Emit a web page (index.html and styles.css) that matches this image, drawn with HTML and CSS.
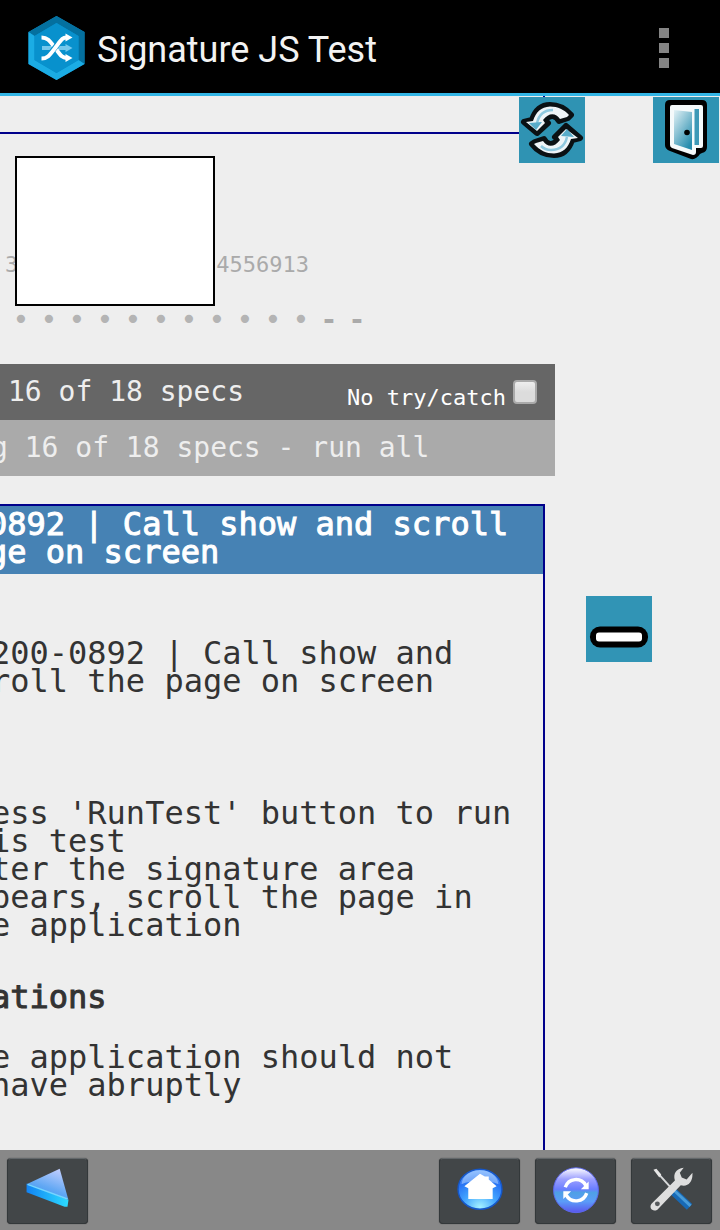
FILE: index.html
```html
<!DOCTYPE html>
<html lang="en">
<head>
<meta charset="utf-8">
<title>Signature JS Test</title>
<link rel="stylesheet" href="styles.css">
</head>
<body>
<header class="app-bar">
  <svg class="app-logo" viewBox="0 0 56 64" aria-hidden="true">
    <path fill="#078bc9" d="M28 0 56 16v32L28 64 0 48V16z"/>
    <path fill="#04709f" d="M28 0 56 16v32l-6-4V20L28 7 6 20 0 16z"/>
    <path fill="#1bace4" d="M0 16l6 4v24l22 13 22-13 6 4-28 16L0 48z"/>
    <path fill="#0891cd" d="M28 7l22 13v24L28 57 6 44V20z"/>
    <path fill="none" stroke="#75c8ec" stroke-width="4" d="M13.500 32H38"/>
    <path fill="#75c8ec" d="M37 28l7 4-7 4z"/>
    <path fill="none" stroke="#fff" stroke-width="4" d="M13 21.500c6 0 8 3 14 11s7 9.500 11 9.500"/>
    <path fill="none" stroke="#0891cd" stroke-width="5.500" d="M23 36l8-10"/>
    <path fill="none" stroke="#fff" stroke-width="4" d="M13 42.500c6 0 8-3 14-11s7-10 11-10"/>
    <path fill="#fff" d="M37 17.500l7 4-7 4zM37 38l7 4-7 4z"/>
  </svg>
  <h1 class="app-title">Signature JS Test</h1>
  <button class="menu-button" aria-label="More options"><span class="menu-dot"></span><span class="menu-dot"></span><span class="menu-dot"></span></button>
</header>

<main class="page">
  <div class="top-panel"></div>
  <div class="version"><span>3</span><span>4556913</span></div>
  <ul class="symbols">
    <li>•</li><li>•</li><li>•</li><li>•</li><li>•</li><li>•</li><li>•</li><li>•</li><li>•</li><li>•</li><li>•</li><li class="skipped">-</li><li class="skipped">-</li>
  </ul>
  <section class="bars">
    <div class="bar bar-ran">
      <span>16 of 18 specs</span>
      <div class="try-catch">
        <label for="no-try">No try/catch</label>
        <input class="check" type="checkbox" id="no-try">
      </div>
    </div>
    <a class="bar bar-all" href="#"><span>g 16 of 18 specs - run all</span></a>
  </section>
  <article class="spec">
    <h2 class="spec-title"><span class="spec-title-text">0892 | Call show and scroll<br>ge on screen</span></h2>
    <div class="spec-body">
      <p class="spec-name">200-0892 | Call show and<br>roll the page on screen</p>
      <p class="spec-steps">ess 'RunTest' button to run<br>is test<br>ter the signature area<br>pears, scroll the page in<br>e application</p>
      <h3 class="spec-heading">ations</h3>
      <p class="spec-result">e application should not<br>have abruptly</p>
    </div>
  </article>

  <div class="signature-area"></div>
  <button class="tile tile-refresh" aria-label="Refresh">
    <svg viewBox="0 0 66 66">
      <rect width="66" height="66" fill="#2f93b3"/>
      <g stroke="#0a1114" stroke-width="6" stroke-linejoin="round" fill="#000">
        <path d="M5 25l8-2C16 14 22 8 31 8c9 0 15 3 21 10l-3 3-9 3C37 18 31 17 26 23l3 3-11 10z"/>
        <path d="M61 41l-8 2C50 52 44 58 35 58c-9 0-16-3-22-11l3-2 9-3c3 6 9 7 14 1l-3-3 11-11z"/>
      </g>
      <g fill="#eef5f8">
        <path d="M7 25l7-1C17 15 22 10 31 9.500c8 0 14 3 19 8.500l-2 2-7 2C37 16 30 15 24 23l2 3-8 8z"/>
        <path d="M59 41l-7 1C49 51 44 56 35 56.500c-8 0-14-3-20-9.500l2-1 7-2c4 6 11 7 17-1l-2-3 8-8z"/>
      </g>
      <path fill="none" stroke="#8fc9df" stroke-width="2.500" d="M18 26c2-9 7-13 16-13M48 40c-2 9-7 13-16 13-4 0-8-2-10-4"/>
      <path fill="#58acc9" d="M10 26l13-1-6 8zM55 40l-13-1 6-7z"/>
    </svg>
  </button>
  <button class="tile tile-exit" aria-label="Exit">
    <svg viewBox="0 0 66 66">
      <defs><linearGradient id="door" x1="0" y1="0" x2=".7" y2="1"><stop offset="0" stop-color="#e3f2f6"/><stop offset="1" stop-color="#278dae"/></linearGradient></defs>
      <rect width="66" height="66" fill="#2f93b3"/>
      <path d="M17 3h32q5 0 5 5v42q0 5-5 6l-2 1q-4 6-9 5L17 54q-5-2-5-6V8q0-5 5-5z"/>
      <path fill="#f5fafb" d="M19 8h29q2 0 2 2v39q0 2-2 2h-5v4q0 3-3 3L19 51q-2-1-2-3V10q0-2 2-2z"/>
      <path fill="url(#door)" d="M21 13l18 2v38L21 47z"/>
      <path fill="#3d99b7" d="M41.500 12H46v36h-4.500z"/>
      <circle cx="34" cy="35.500" r="2.800"/>
    </svg>
  </button>
  <button class="tile tile-minus" aria-label="Collapse">
    <svg viewBox="0 0 66 66">
      <rect width="66" height="66" fill="#3194b5"/>
      <rect x="4" y="30.500" width="58" height="21" rx="10"/>
      <rect x="10" y="36.500" width="46" height="9" rx="3" fill="#fff"/>
    </svg>
  </button>
</main>

<nav class="toolbar">
  <button class="tool tool-back" aria-label="Back">
    <svg viewBox="0 0 81 65">
      <defs><linearGradient id="top" x1=".8" y1="0" x2=".3" y2="1"><stop offset="0" stop-color="#c4cfff"/><stop offset=".6" stop-color="#62a8f4"/><stop offset="1" stop-color="#3a93f0"/></linearGradient>
      <linearGradient id="edge"><stop offset="0" stop-color="#1283f4"/><stop offset="1" stop-color="#2cdcff"/></linearGradient></defs>
      <path fill="url(#top)" d="M53 10l9 32-43-16z"/>
      <path fill="url(#edge)" d="M19 25l43 17-1 7h-3L19 34z"/>
      <path fill="none" stroke="#75d5ff" stroke-width="1.500" d="M20 26l41 15"/>
    </svg>
  </button>
  <button class="tool" aria-label="Home">
    <svg viewBox="0 0 81 65">
      <defs><radialGradient id="home" cx=".5" cy=".95" r=".95"><stop offset="0" stop-color="#a5f2ff"/><stop offset=".4" stop-color="#43a6ff"/><stop offset=".75" stop-color="#2671f4"/><stop offset="1" stop-color="#83b8ff"/></radialGradient></defs>
      <ellipse cx="41" cy="31" rx="22.500" ry="20.500" fill="url(#home)" stroke="#1557c9" stroke-width="1.500"/>
      <path fill="#a9ceff" opacity=".6" d="M22 26c2-19 36-19 38 0-10-5-28-5-38 0z"/>
      <path fill="#fff" d="M41 15l5 3h4v3l8 7-4 2v11H29V30l-4-2z"/>
    </svg>
  </button>
  <button class="tool" aria-label="Reload">
    <svg viewBox="0 0 81 65">
      <defs><linearGradient id="sync" x1="0" y1="0" x2="0" y2="1"><stop offset="0" stop-color="#fff"/><stop offset=".25" stop-color="#9da0ff"/><stop offset=".48" stop-color="#6a7dff"/><stop offset=".55" stop-color="#4fa0e5"/><stop offset=".75" stop-color="#5b9cf8"/><stop offset="1" stop-color="#5b55ed"/></linearGradient></defs>
      <circle cx="41" cy="32" r="23" fill="url(#sync)" stroke="#5b68ed"/>
      <g fill="none" stroke="#fff" stroke-width="3.500"><path d="M30 29a11.500 11.500 0 0 1 21-2"/><path d="M52 35a11.500 11.500 0 0 1-21 2"/></g>
      <path fill="#fff" d="M54 23v8h-8zM28 41v-8h8z"/>
    </svg>
  </button>
  <button class="tool" aria-label="Settings">
    <svg viewBox="0 0 81 65">
      <path stroke="#d7d9da" stroke-width="2" d="M26 14l18 20"/>
      <path fill="#e6e6e6" d="M22 11l3-1 5 6-2 3z"/>
      <path stroke="#1769b5" stroke-width="8" d="M43 34l16 15"/>
      <path stroke="#489bd8" stroke-width="3" d="M43 32l17 16"/>
      <path fill="#dedede" d="M53 9c-8 1-11 6-9 13L20 46c-3 4 1 9 6 6l24-25c7 2 12-3 12-11V14l-6 7-5-2-2-5z"/>
      <circle cx="26" cy="46" r="2.500" fill="#55595c"/>
    </svg>
  </button>
</nav>
</body>
</html>
```
FILE: styles.css
```css
* { box-sizing: border-box; }

body {
  margin: 0;
  height: 100vh;
  display: flex;
  flex-direction: column;
  background: #eee;
  color: #333;
  font-family: "DejaVu Sans Mono", monospace;
  overflow: hidden;
}

button {
  padding: 0;
  border: 0;
  background: none;
}

svg { display: block; }

.app-bar {
  display: flex;
  align-items: center;
  flex: none;
  height: 96px;
  padding: 2px 44px 0 28px;
  background: #000;
  border-bottom: 3px solid #33b5e5;
}

.app-logo { width: 57px; height: 64px; }

.app-title {
  flex: 1;
  margin: 4px 0 0 12px;
  color: #f3f3f3;
  font: 400 36px/44px Roboto, sans-serif;
}

.menu-button {
  display: flex;
  flex-direction: column;
  gap: 5px;
  padding: 0 7px;
}

.menu-dot {
  width: 10px;
  height: 10px;
  background: #858585;
}

.page {
  position: relative;
  flex: 1;
  min-height: 0;
  overflow: hidden;
}

.top-panel {
  width: calc(100% - 175px);
  height: 38px;
  border: solid #00008b;
  border-width: 0 2px 2px 0;
}

.version {
  display: flex;
  gap: 198px;
  margin-top: 117px;
  padding-left: 5px;
  color: #aaa;
  font-size: 22px;
  line-height: 28px;
}

.symbols {
  display: flex;
  margin: 27px 0 30px 7px;
  padding: 0;
  list-style: none;
  color: #b4b4b4;
  font-size: 28px;
  line-height: 28px;
}

.symbols li {
  width: 28px;
  text-align: center;
}

.symbols .skipped {
  color: #aaa;
  font-weight: 700;
}

.bars { width: calc(100% - 165px); }

.bar {
  display: flex;
  justify-content: space-between;
  height: 56px;
  color: #eee;
  font-size: 28px;
  line-height: 56px;
  text-decoration: none;
  white-space: pre;
}

.bar-ran {
  padding: 0 18px 0 8px;
  background: #666;
}

.bar-all {
  background: #aaa;
}

.bar-all span { margin-left: -9px; }

.try-catch {
  display: flex;
  align-items: center;
  gap: 7px;
  color: #fff;
  font-size: 22px;
}

.try-catch label { padding-top: 12px; }

.check {
  appearance: none;
  width: 24px;
  height: 24px;
  margin: 0;
  border: 2px solid #aaa;
  border-radius: 4px;
  background: linear-gradient(#eee, #dcdcdc 50%);
}

.spec {
  width: calc(100% - 175px);
  height: 1200px;
  margin-top: 28px;
  border: solid #00008b;
  border-width: 2px 2px 0 0;
  font-size: 32px;
  line-height: 28px;
  white-space: nowrap;
}

.spec-title,
.spec-heading {
  margin: 0;
  font-size: 32px;
  font-weight: 400;
  -webkit-text-stroke: 1px currentColor;
}

.spec-title {
  padding: 4px 0 8px;
  background: #4682b4;
  color: #fff;
}

.spec-title-text {
  display: block;
  margin-left: -12px;
}

.spec-body {
  margin-left: -9px;
  padding-top: 65px;
}

.spec-body p { margin: 0; }

.spec-name { padding-bottom: 104px; }

.spec-steps { padding-bottom: 44px; }

.spec-heading { padding-bottom: 32px; }

.signature-area {
  position: absolute;
  top: 60px;
  left: 15px;
  width: 200px;
  height: 150px;
  border: 2px solid #000;
  background: #fff;
}

.tile {
  position: absolute;
  width: 66px;
  height: 66px;
}

.tile-refresh { top: 1px; right: 135px; }

.tile-exit { top: 1px; right: 1px; }

.tile-minus { top: 500px; right: 68px; }

.toolbar {
  display: flex;
  flex: none;
  gap: 15px;
  height: 80px;
  padding: 8px 8px 6px 7px;
  background: #888;
}

.tool {
  width: 81px;
  height: 66px;
  border: 1px solid #33383a;
  border-top-color: #62676a;
  border-radius: 4px;
  background: #424648;
  box-shadow: 0 0 1px #333;
}

.tool svg { width: 100%; }

.tool-back { margin-right: auto; }
```
